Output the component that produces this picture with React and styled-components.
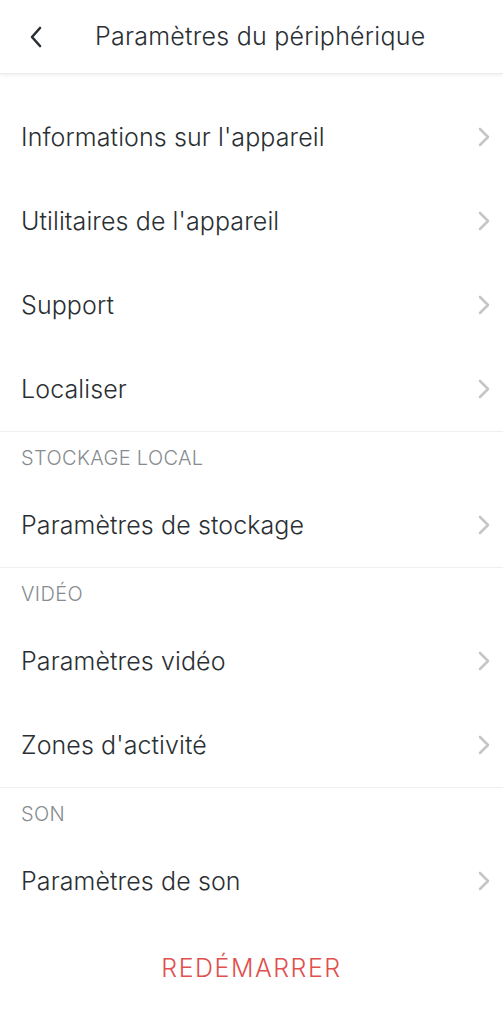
import React from "react";
import styled, { createGlobalStyle } from "styled-components";

const Global = createGlobalStyle`
  html, body { margin: 0; padding: 0; background: #fff; }
  body { font-family: Inter, "Noto Sans", "Liberation Sans", sans-serif; -webkit-font-smoothing: antialiased; }
`;

const Page = styled.div`
  width: 503px;
  min-height: 1024px;
  background: #fff;
  display: flex;
  flex-direction: column;
`;

const Header = styled.header`
  height: 73px;
  display: flex;
  align-items: center;
  box-shadow: 0 1px 4px rgba(0, 0, 0, 0.08);
  border-bottom: 1px solid #ececec;
  position: relative;
  z-index: 1;
`;

const BackButton = styled.button`
  width: 95px;
  height: 73px;
  border: none;
  background: none;
  padding: 0 0 0 27px;
  display: flex;
  align-items: center;
  cursor: pointer;
`;

const Title = styled.h1`
  margin: 0;
  font-size: 25px;
  font-weight: 300;
  color: #2a2f33;
  letter-spacing: 0.25px;
  padding-bottom: 2px;
`;

const List = styled.main`
  display: flex;
  flex-direction: column;
  padding-top: 21px;
`;

const Row = styled.div`
  height: 84px;
  display: flex;
  align-items: center;
  justify-content: space-between;
  padding: 0 10px 0 21px;
`;

const RowLabel = styled.span`
  font-size: 25px;
  font-weight: 300;
  color: #2a2f33;
  letter-spacing: 0.1px;
`;

const Divider = styled.div`
  height: 1px;
  background: #f0f0f0;
`;

const SectionHeader = styled.div`
  height: 51px;
  display: flex;
  align-items: center;
  padding: 0 21px;
  font-size: 20px;
  font-weight: 300;
  color: #868c90;
  letter-spacing: 0.35px;
  text-transform: uppercase;
`;

const Restart = styled.button`
  margin-top: 22px;
  align-self: center;
  border: none;
  background: none;
  font-family: inherit;
  font-size: 25px;
  font-weight: 300;
  color: #e0504d;
  letter-spacing: 1.5px;
  padding: 8px 16px;
  cursor: pointer;
`;

const Chevron = () => (
  <svg width="18" height="26" viewBox="0 0 18 26" fill="none">
    <path d="M5 5l8 8-8 8" stroke="#c6c6c6" strokeWidth="2.6" strokeLinecap="round" strokeLinejoin="round" />
  </svg>
);

const BackIcon = () => (
  <svg width="18" height="26" viewBox="0 0 18 26" fill="none">
    <path d="M13 4L5 13l8 9" stroke="#2a2f33" strokeWidth="2.6" strokeLinecap="round" strokeLinejoin="round" />
  </svg>
);

const Item = ({ label }) => (
  <Row>
    <RowLabel>{label}</RowLabel>
    <Chevron />
  </Row>
);

const sections = [
  { title: null, items: ["Informations sur l'appareil", "Utilitaires de l'appareil", "Support", "Localiser"] },
  { title: "Stockage local", items: ["Paramètres de stockage"] },
  { title: "Vidéo", items: ["Paramètres vidéo", "Zones d'activité"] },
  { title: "Son", items: ["Paramètres de son"] },
];

export default function App() {
  return (
    <Page>
      <Global />
      <Header>
        <BackButton aria-label="Retour">
          <BackIcon />
        </BackButton>
        <Title>Paramètres du périphérique</Title>
      </Header>
      <List>
        {sections.map((s, i) => (
          <React.Fragment key={i}>
            {i > 0 && <Divider />}
            {s.title && <SectionHeader>{s.title}</SectionHeader>}
            {s.items.map((it) => (
              <Item key={it} label={it} />
            ))}
          </React.Fragment>
        ))}
        <Restart>REDÉMARRER</Restart>
      </List>
    </Page>
  );
}
